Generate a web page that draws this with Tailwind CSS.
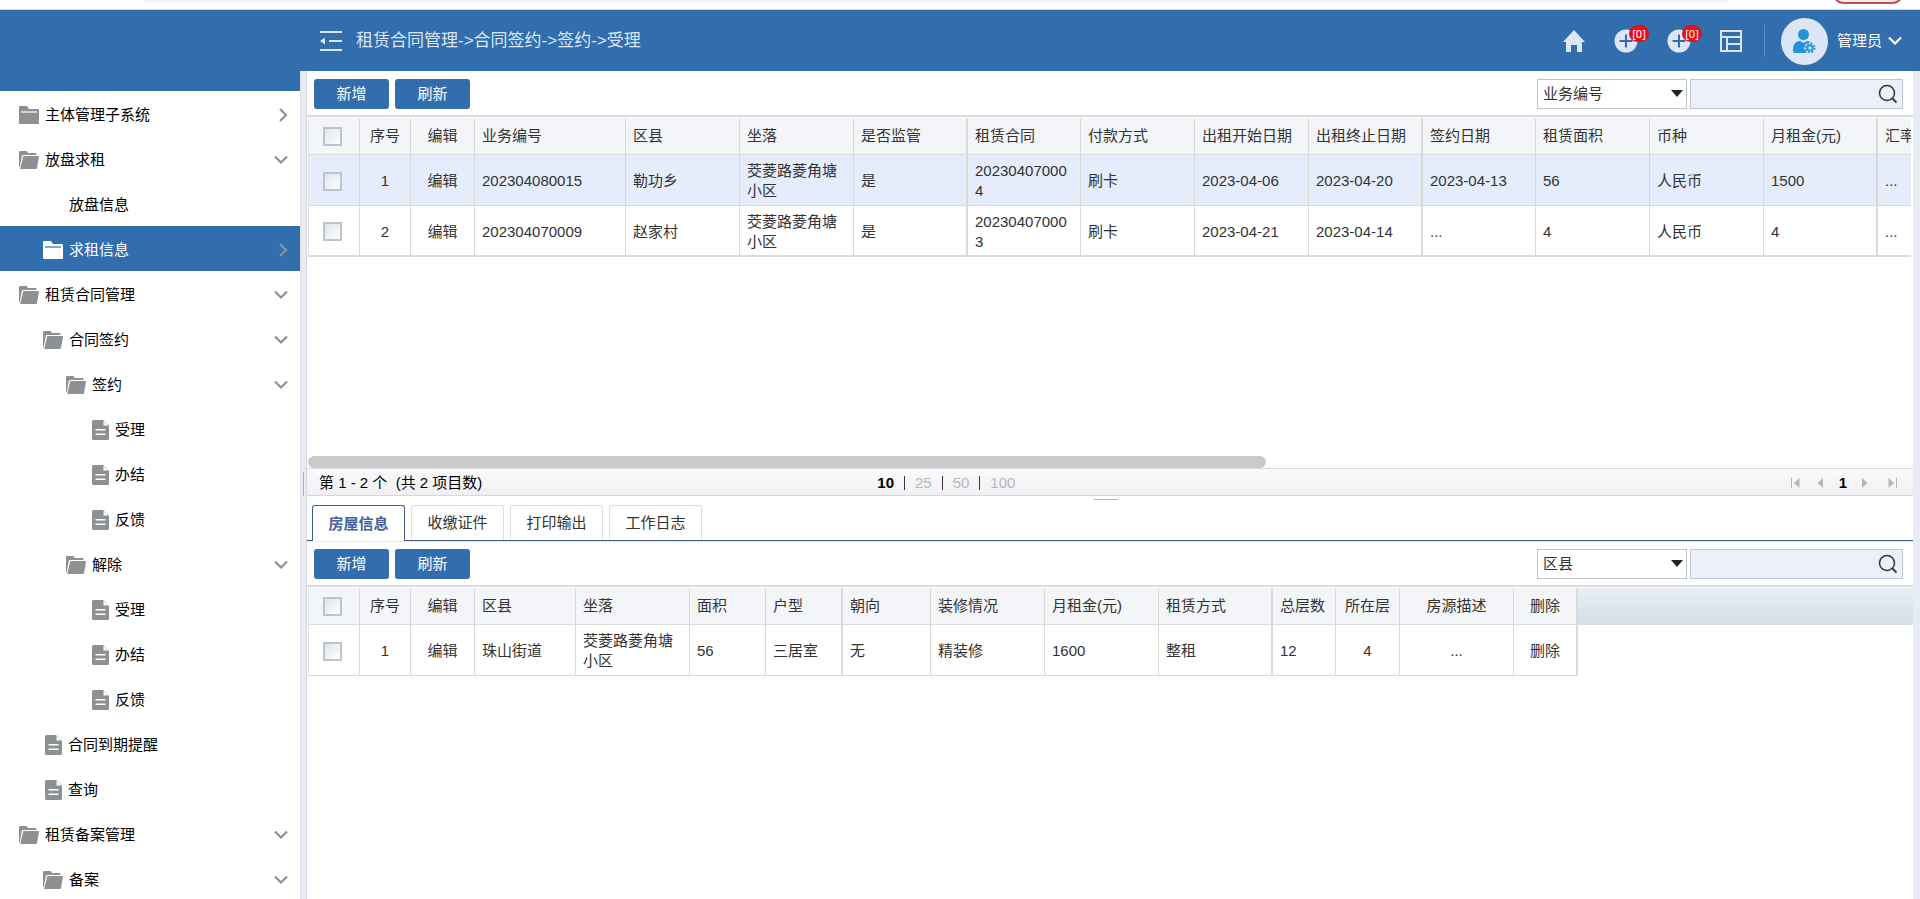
<!DOCTYPE html>
<html lang="zh-CN">
<head>
<meta charset="utf-8">
<title>租赁合同管理</title>
<script src="https://cdn.jsdelivr.net/npm/@tailwindcss/browser@4"></script>
</head>
<body class="flex h-screen flex-col overflow-hidden bg-white font-['Liberation_Sans','Noto_Sans_CJK_SC',sans-serif] text-[15px] leading-5 text-[#333]">
<svg class="hidden">
  <symbol id="folder" viewBox="0 0 20 18"><path fill="currentColor" d="M1 0h7l2 3h9a1 1 0 0 1 1 1v13a1 1 0 0 1-1 1H1a1 1 0 0 1-1-1V1a1 1 0 0 1 1-1z"/><path fill="var(--slot)" d="M2 5.400h16v1.200H2z"/></symbol>
  <symbol id="open" viewBox="0 0 20 18"><path fill="currentColor" d="M0 1a1 1 0 0 1 1-1h6.500l1.500 2h7.500a1 1 0 0 1 1 1v1H4.200a1.500 1.500 0 0 0-1.400 1.100L.8 16H0z"/><path fill="currentColor" d="M4.300 5H19.200a.8.8 0 0 1 .8 1l-2 11a1.200 1.200 0 0 1-1.200 1H1.200z"/></symbol>
  <symbol id="doc" viewBox="0 0 17 20"><path fill="currentColor" fill-rule="evenodd" d="M1.500 0H11l6 6v12.500a1.500 1.500 0 0 1-1.500 1.500h-14A1.500 1.500 0 0 1 0 18.500v-17A1.500 1.500 0 0 1 1.500 0zM11.500 1v4.500h4.500zM3.500 9v1.500h10V9zM3.500 13.500V15h10v-1.500z"/></symbol>
  <symbol id="down" viewBox="0 0 14 10"><path fill="none" stroke="currentColor" stroke-width="2.200" d="M1 1.500l6 6 6-6"/></symbol>
  <symbol id="right" viewBox="0 0 10 14"><path fill="none" stroke="currentColor" stroke-width="2.200" d="M2 1l6 6-6 6"/></symbol>
  <symbol id="plus" viewBox="0 0 24 24"><circle cx="12" cy="12" r="11.500" fill="#dce6f6"/><path stroke="#326dae" stroke-width="2" d="M12 5.500v13M5.500 12h13"/></symbol>
  <symbol id="search" viewBox="0 0 20 20"><circle cx="9" cy="9" r="7.500" fill="none" stroke="#2d3340" stroke-width="1.500"/><path stroke="#2d3340" stroke-width="1.800" d="M14.500 14.500l4 4"/></symbol>
  <symbol id="tri" viewBox="0 0 12 7"><path fill="#22242c" d="M0 0h12L6 7z"/></symbol>
</svg>

<div class="flex h-2.5 shrink-0 justify-between overflow-hidden border-b border-[#c9d9ea] pr-4 pl-36">
  <div class="h-[3px] w-[90%] rounded-b bg-[#f3f4f5]"></div>
  <div class="-mt-5 h-6 w-[72px] rounded-full border-2 border-[#c04a55] bg-[#f8e9ea]"></div>
</div>

<div class="flex min-h-0 flex-1">
  <aside class="w-[300px] shrink-0 overflow-hidden">
    <div class="h-[81px] bg-[#326dae]"></div>
    <nav class="text-black [--slot:#fff] [&_svg]:shrink-0 [&_svg]:text-[#8e9194] [&>a]:flex [&>a]:h-[45px] [&>a]:items-center [&>a]:gap-1.5 [&>a]:pt-0.5 [&>a]:pr-3">
      <a href="#" class="pl-[19px]"><svg class="h-[18px] w-5"><use href="#folder"/></svg><span class="flex-1">主体管理子系统</span><svg class="h-3.5 w-2.5"><use href="#right"/></svg></a>
      <a href="#" class="pl-[19px]"><svg class="h-[18px] w-5"><use href="#open"/></svg><span class="flex-1">放盘求租</span><svg class="h-2.5 w-3.5"><use href="#down"/></svg></a>
      <a href="#" class="pl-[69px]"><span>放盘信息</span></a>
      <a href="#" class="bg-[#326dae] pl-[43px] text-white [--slot:#326dae]"><svg class="h-[18px] w-5"><use href="#folder" class="text-white"/></svg><span class="flex-1">求租信息</span><svg class="h-3.5 w-2.5"><use href="#right"/></svg></a>
      <a href="#" class="pl-[19px]"><svg class="h-[18px] w-5"><use href="#open"/></svg><span class="flex-1">租赁合同管理</span><svg class="h-2.5 w-3.5"><use href="#down"/></svg></a>
      <a href="#" class="pl-[43px]"><svg class="h-[18px] w-5"><use href="#open"/></svg><span class="flex-1">合同签约</span><svg class="h-2.5 w-3.5"><use href="#down"/></svg></a>
      <a href="#" class="pl-[66px]"><svg class="h-[18px] w-5"><use href="#open"/></svg><span class="flex-1">签约</span><svg class="h-2.5 w-3.5"><use href="#down"/></svg></a>
      <a href="#" class="pl-[92px]"><svg class="h-5 w-[17px]"><use href="#doc"/></svg><span>受理</span></a>
      <a href="#" class="pl-[92px]"><svg class="h-5 w-[17px]"><use href="#doc"/></svg><span>办结</span></a>
      <a href="#" class="pl-[92px]"><svg class="h-5 w-[17px]"><use href="#doc"/></svg><span>反馈</span></a>
      <a href="#" class="pl-[66px]"><svg class="h-[18px] w-5"><use href="#open"/></svg><span class="flex-1">解除</span><svg class="h-2.5 w-3.5"><use href="#down"/></svg></a>
      <a href="#" class="pl-[92px]"><svg class="h-5 w-[17px]"><use href="#doc"/></svg><span>受理</span></a>
      <a href="#" class="pl-[92px]"><svg class="h-5 w-[17px]"><use href="#doc"/></svg><span>办结</span></a>
      <a href="#" class="pl-[92px]"><svg class="h-5 w-[17px]"><use href="#doc"/></svg><span>反馈</span></a>
      <a href="#" class="pl-[45px]"><svg class="h-5 w-[17px]"><use href="#doc"/></svg><span>合同到期提醒</span></a>
      <a href="#" class="pl-[45px]"><svg class="h-5 w-[17px]"><use href="#doc"/></svg><span>查询</span></a>
      <a href="#" class="pl-[19px]"><svg class="h-[18px] w-5"><use href="#open"/></svg><span class="flex-1">租赁备案管理</span><svg class="h-2.5 w-3.5"><use href="#down"/></svg></a>
      <a href="#" class="pl-[43px]"><svg class="h-[18px] w-5"><use href="#open"/></svg><span class="flex-1">备案</span><svg class="h-2.5 w-3.5"><use href="#down"/></svg></a>
    </nav>
  </aside>

  <div class="flex min-w-0 flex-1 flex-col">
    <header class="flex h-[61px] shrink-0 items-center bg-[#326dae] pt-px pr-[18px] pl-5 text-[#dce6f6]">
      <button type="button" aria-label="收起菜单"><svg class="h-5 w-[22px]" viewBox="0 0 22 20"><path d="M0 1h22M9 10h13M0 19h22" stroke="currentColor" stroke-width="2"/><path d="M0 10l5-3.500v7z" fill="currentColor"/></svg></button>
      <div class="ml-3.5 flex-1 text-[17px]">租赁合同管理-&gt;合同签约-&gt;签约-&gt;受理</div>
      <div class="flex items-center">
        <button type="button" aria-label="首页"><svg class="h-[22px] w-[22px]" viewBox="0 0 22 22"><path fill="currentColor" d="M11 0l11 12h-3v10h-5v-7H8v7H3V12H0z"/></svg></button>
        <button type="button" aria-label="新增一" class="relative ml-[29px]"><svg class="size-6"><use href="#plus"/></svg><span class="absolute -top-1 left-[15px] flex h-[17px] w-5 items-center justify-center rounded-full bg-[#e60f1a] font-['Noto_Sans'] text-[11px] text-white">[0]</span></button>
        <button type="button" aria-label="新增二" class="relative ml-[29px]"><svg class="size-6"><use href="#plus"/></svg><span class="absolute -top-1 left-[15px] flex h-[17px] w-5 items-center justify-center rounded-full bg-[#e60f1a] font-['Noto_Sans'] text-[11px] text-white">[0]</span></button>
        <button type="button" aria-label="布局" class="ml-[29px]"><svg class="size-[22px]" viewBox="0 0 22 22" fill="none" stroke="currentColor" stroke-width="2"><path d="M1 1h20v20H1zM1 7h20M7 7v14M7 14h14"/></svg></button>
        <div class="ml-[22px] h-8 w-px bg-[#5f8fc6]"></div>
        <div class="ml-4 flex size-[47px] items-center justify-center rounded-full bg-[#dce6f6]"><svg class="h-6 w-[23px]" viewBox="0 0 23 24"><circle cx="10.500" cy="5.500" r="5.500" fill="#2394d6"/><path fill="#2394d6" d="M0 21c0-6 3-9 7-9l3.500 2 3.500-2c2 0 3.500.6 4.500 2v10H2c-1.500 0-2-1-2-3z"/><circle cx="17" cy="19" r="5.800" fill="#dce6f6"/><circle cx="17" cy="19" r="2.800" fill="none" stroke="#2394d6" stroke-width="2"/><circle cx="17" cy="19" r="4.700" fill="none" stroke="#2394d6" stroke-width="1.600" stroke-dasharray="2 1.690"/></svg></div>
        <button type="button" class="ml-[9px] flex items-center gap-1.5 text-white"><span>管理员</span><svg class="h-2.5 w-3.5"><use href="#down"/></svg></button>
      </div>
    </header>

    <div class="flex min-h-0 flex-1 bg-[#e7ebf4]">
      <div class="flex w-[7px] shrink-0 flex-col border-x border-l-[#dadfe8] border-r-[#d2d7e0] pt-[401px]"><div class="ml-[2px] h-6 w-px bg-[#a9afba]"></div></div>
      <main class="mr-[7px] flex min-w-0 flex-1 flex-col bg-white">
        <section class="flex h-[425px] shrink-0 flex-col" aria-label="合同列表">
          <div class="flex items-start gap-1.5 border-b-2 border-[#dadbdc] pt-2 pr-2.5 pb-[6px] pl-[7px]">
            <button type="button" class="h-[30px] w-[75px] rounded-[3px] bg-[#326dae] text-white">新增</button>
            <button type="button" class="h-[30px] w-[75px] rounded-[3px] bg-[#326dae] text-white">刷新</button>
            <div class="ml-auto flex gap-[3px]">
              <label class="relative"><select aria-label="查询字段" class="h-[30px] w-[150px] appearance-none border border-[#c2c4c8] bg-white pl-[5px]"><option>业务编号</option></select><svg class="pointer-events-none absolute top-[11px] right-1 h-[7px] w-3"><use href="#tri"/></svg></label>
              <div class="flex h-[30px] w-[213px] items-center border border-[#c2c6ce] bg-[#ecf0f8] pr-1"><input type="text" aria-label="查询内容" class="h-full min-w-0 flex-1 px-2 outline-none"><button type="button" aria-label="查询"><svg class="size-5"><use href="#search"/></svg></button></div>
            </div>
          </div>
          <div class="mt-px mr-0.5 ml-px flex-1 overflow-hidden">
            <table class="w-[1709px] table-fixed border-separate border-spacing-0 border-l border-[#e4e4e4] text-left [&_td]:pt-0.5 [&_:is(td,th)]:border-r [&_:is(td,th)]:border-b [&_:is(td,th)]:border-[#dcdad4] [&_:is(td,th)]:px-[7px] [&_:is(td,th)]:font-normal [&_:is(td,th):nth-child(-n+3)]:px-0 [&_:is(td,th):nth-child(-n+3)]:text-center [&_:is(td,th):nth-child(7)]:border-r-2 [&_:is(td,th):nth-child(11)]:border-r-2 [&_:is(td,th):nth-child(15)]:border-r-2 [&_input]:block [&_input]:ml-3.5 [&_input]:size-[19px] [&_input]:appearance-none [&_input]:border-2 [&_input]:border-[#bcc4cc] [&_input]:bg-linear-to-br [&_input]:from-[#dde5ea] [&_input]:to-white">
              <colgroup><col class="w-[51px]"><col class="w-[51px]"><col class="w-[64px]"><col class="w-[151px]"><col class="w-[114px]"><col class="w-[114px]"><col class="w-[114px]"><col class="w-[113px]"><col class="w-[114px]"><col class="w-[114px]"><col class="w-[114px]"><col class="w-[113px]"><col class="w-[114px]"><col class="w-[114px]"><col class="w-[114px]"><col></colgroup>
              <thead><tr class="h-[37px] bg-[#f4f5f8]"><th><input type="checkbox" aria-label="全选"></th><th>序号</th><th>编辑</th><th>业务编号</th><th>区县</th><th>坐落</th><th>是否监管</th><th>租赁合同</th><th>付款方式</th><th>出租开始日期</th><th>出租终止日期</th><th>签约日期</th><th>租赁面积</th><th>币种</th><th>月租金(元)</th><th>汇率</th></tr></thead>
              <tbody class="break-all">
                <tr class="h-[51px] bg-[#e5ecfb]"><td><input type="checkbox" aria-label="选择第1行"></td><td>1</td><td><a href="#">编辑</a></td><td>202304080015</td><td>勒功乡</td><td>茭菱路菱角塘小区</td><td>是</td><td>202304070004</td><td>刷卡</td><td>2023-04-06</td><td>2023-04-20</td><td>2023-04-13</td><td>56</td><td>人民币</td><td>1500</td><td>...</td></tr>
                <tr class="h-[51px] [&>td]:border-b-2"><td><input type="checkbox" aria-label="选择第2行"></td><td>2</td><td><a href="#">编辑</a></td><td>202304070009</td><td>赵家村</td><td>茭菱路菱角塘小区</td><td>是</td><td>202304070003</td><td>刷卡</td><td>2023-04-21</td><td>2023-04-14</td><td>...</td><td>4</td><td>人民币</td><td>4</td><td>...</td></tr>
              </tbody>
            </table>
          </div>
          <div class="ml-px h-3 w-[calc(60%-6px)] rounded-full bg-[#cacaca]"></div>
          <div class="grid h-7 shrink-0 grid-cols-[35%_auto_1fr] items-center border-y border-[#d8d9da] bg-linear-to-b from-[#fafafc] to-[#f0f0f2] pt-0.5 pr-4 pl-3 text-black">
            <div>第 1 - 2 个&nbsp; (共 2 项目数)</div>
            <div class="flex items-center gap-2.5 pl-1.5 [&_button]:text-[#b5b7bb] [&_i]:h-3.5 [&_i]:w-px [&_i]:bg-[#4a2850]"><strong>10</strong><i></i><button type="button">25</button><i></i><button type="button">50</button><i></i><button type="button">100</button></div>
            <div class="flex items-center justify-end [&_svg]:h-2.5 [&_svg]:w-[9px] [&_svg]:fill-[#b4b6ba]">
              <button type="button" aria-label="首页"><svg viewBox="0 0 9 10"><path d="M0 0h1v10H0zM8.500 0v10L3 5z"/></svg></button>
              <button type="button" aria-label="上一页" class="ml-4"><svg viewBox="0 0 9 10"><path d="M7 0v10L1.500 5z"/></svg></button>
              <strong class="ml-3.5">1</strong>
              <button type="button" aria-label="下一页" class="ml-3.5"><svg viewBox="0 0 9 10"><path d="M1 0v10l5.500-5z"/></svg></button>
              <button type="button" aria-label="末页" class="ml-[18px]"><svg viewBox="0 0 9 10"><path d="M8 0h1v10H8zM.5 0v10L6 5z"/></svg></button>
            </div>
          </div>
        </section>

        <div class="flex h-[9px] shrink-0 justify-center pt-[3px] pr-2"><div class="h-px w-6 bg-[#b0b2b6]"></div></div>

        <section class="flex min-h-0 flex-1 flex-col" aria-label="合同明细">
          <div class="flex h-9 shrink-0 gap-1.5 border-b border-[#3f5c8c] pl-[5px] [&>button]:h-[35px] [&>button]:w-[93px] [&>button]:rounded-t-[3px] [&>button]:border [&>button]:border-b-0 [&>button]:border-[#dcdde2]" role="tablist">
            <button type="button" role="tab" aria-selected="true" class="mb-[-1px] bg-white font-bold text-[#45619c] aria-selected:h-9! aria-selected:border-[#3f5c8c]!">房屋信息</button>
            <button type="button" role="tab">收缴证件</button>
            <button type="button" role="tab">打印输出</button>
            <button type="button" role="tab">工作日志</button>
          </div>
          <div class="flex items-start gap-1.5 border-t border-b-2 border-t-[#e2ebf6] border-b-[#dadbdc] pt-[7px] pr-2.5 pb-[6px] pl-[7px]">
            <button type="button" class="h-[30px] w-[75px] rounded-[3px] bg-[#326dae] text-white">新增</button>
            <button type="button" class="h-[30px] w-[75px] rounded-[3px] bg-[#326dae] text-white">刷新</button>
            <div class="ml-auto flex gap-[3px]">
              <label class="relative"><select aria-label="明细查询字段" class="h-[30px] w-[150px] appearance-none border border-[#c2c4c8] bg-white pl-[5px]"><option>区县</option></select><svg class="pointer-events-none absolute top-[11px] right-1 h-[7px] w-3"><use href="#tri"/></svg></label>
              <div class="flex h-[30px] w-[213px] items-center border border-[#c2c6ce] bg-[#ecf0f8] pr-1"><input type="text" aria-label="明细查询内容" class="h-full min-w-0 flex-1 px-2 outline-none"><button type="button" aria-label="查询"><svg class="size-5"><use href="#search"/></svg></button></div>
            </div>
          </div>
          <div class="mt-px ml-px flex">
            <table class="w-[1270px] shrink-0 table-fixed border-separate border-spacing-0 border-l border-[#e4e4e4] text-left [&_td]:pt-0.5 [&_:is(td,th)]:border-r [&_:is(td,th)]:border-b [&_:is(td,th)]:border-[#dcdad4] [&_:is(td,th)]:px-[7px] [&_:is(td,th)]:font-normal [&_:is(td,th):nth-child(-n+3)]:px-0 [&_:is(td,th):nth-child(-n+3)]:text-center [&_:is(td,th):nth-child(n+13)]:text-center [&_:is(td,th):nth-child(7)]:border-r-2 [&_:is(td,th):nth-child(11)]:border-r-2 [&_:is(td,th):nth-child(15)]:border-r-2 [&_input]:block [&_input]:ml-3.5 [&_input]:size-[19px] [&_input]:appearance-none [&_input]:border-2 [&_input]:border-[#bcc4cc] [&_input]:bg-linear-to-br [&_input]:from-[#dde5ea] [&_input]:to-white">
              <colgroup><col class="w-[51px]"><col class="w-[51px]"><col class="w-[64px]"><col class="w-[101px]"><col class="w-[114px]"><col class="w-[76px]"><col class="w-[77px]"><col class="w-[88px]"><col class="w-[114px]"><col class="w-[114px]"><col class="w-[114px]"><col class="w-[63px]"><col class="w-[64px]"><col class="w-[114px]"><col></colgroup>
              <thead><tr class="h-[37px] bg-[#f4f5f8]"><th><input type="checkbox" aria-label="全选"></th><th>序号</th><th>编辑</th><th>区县</th><th>坐落</th><th>面积</th><th>户型</th><th>朝向</th><th>装修情况</th><th>月租金(元)</th><th>租赁方式</th><th>总层数</th><th>所在层</th><th>房源描述</th><th>删除</th></tr></thead>
              <tbody class="break-all">
                <tr class="h-[51px]"><td><input type="checkbox" aria-label="选择第1行"></td><td>1</td><td><a href="#">编辑</a></td><td>珠山街道</td><td>茭菱路菱角塘小区</td><td>56</td><td>三居室</td><td>无</td><td>精装修</td><td>1600</td><td>整租</td><td>12</td><td>4</td><td>...</td><td><a href="#">删除</a></td></tr>
              </tbody>
            </table>
            <div class="h-[37px] flex-1 bg-linear-to-b from-[#e8eef4] to-[#d2dfe9]"></div>
          </div>
        </section>
      </main>
    </div>
  </div>
</div>
</body>
</html>
